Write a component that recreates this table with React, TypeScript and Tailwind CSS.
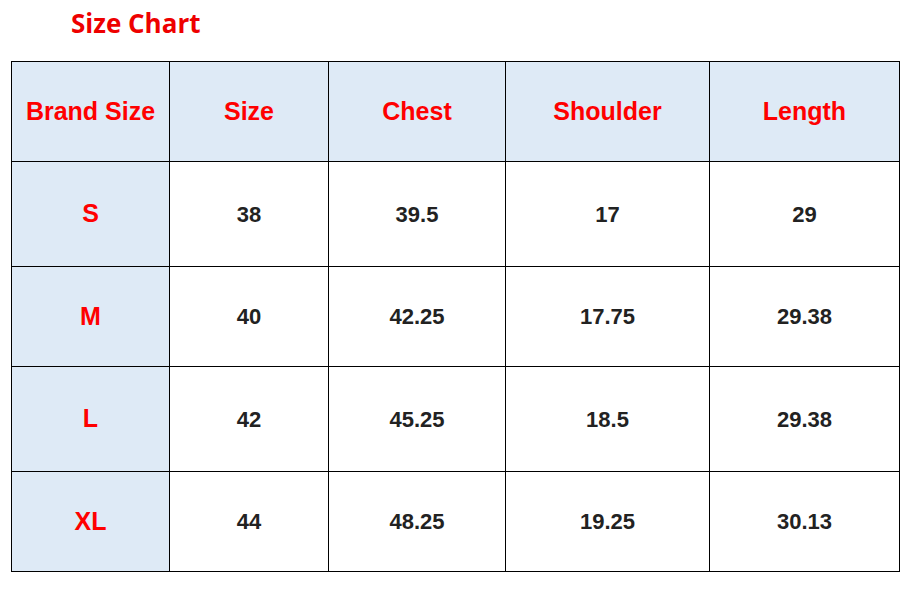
import React from 'react';

const headers = ['Brand Size', 'Size', 'Chest', 'Shoulder', 'Length'];

const rows = [
  ['S', '38', '39.5', '17', '29'],
  ['M', '40', '42.25', '17.75', '29.38'],
  ['L', '42', '45.25', '18.5', '29.38'],
  ['XL', '44', '48.25', '19.25', '30.13'],
];

export default function App() {
  return (
    <div className="w-[911px] h-[593px] bg-white font-['Liberation_Sans',Arial,sans-serif]">
      {/* Title */}
      <div className="h-[61px] pl-[71px] pt-[5px]">
        <h1 className="font-['Open_Sans',sans-serif] font-bold text-[26px] leading-[36px] text-[#ee0000]">
          Size Chart
        </h1>
      </div>

      {/* Table */}
      <div className="ml-[11px] w-[889px] grid grid-cols-[157px_158px_176px_203px_189px] grid-rows-[99px_104px_99px_104px_99px] gap-px bg-black border border-black">
        {headers.map(h => (
          <div key={h} className="bg-[#deeaf6] flex items-center justify-center text-[25px] font-bold text-[#ff0000]">
            {h}
          </div>
        ))}
        {rows.map(r => (
          <React.Fragment key={r[0]}>
            <div className="bg-[#deeaf6] flex items-center justify-center text-[25px] font-bold text-[#ff0000]">
              {r[0]}
            </div>
            {r.slice(1).map((v, i) => (
              <div key={i} className="bg-white flex items-center justify-center text-[22px] font-bold text-[#222222]">
                {v}
              </div>
            ))}
          </React.Fragment>
        ))}
      </div>
    </div>
  );
}
